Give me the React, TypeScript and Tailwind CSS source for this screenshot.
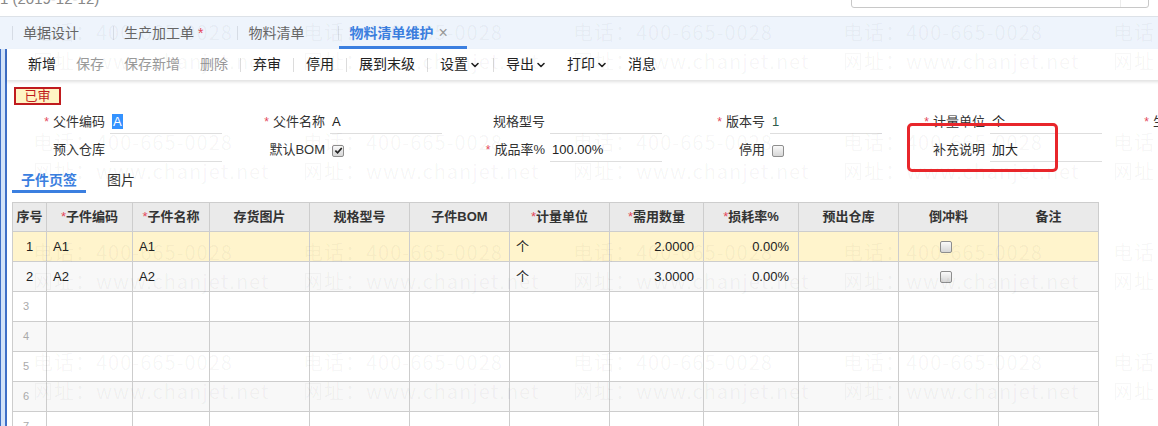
import { ChevronDown } from 'lucide-react';

const tabs = [
    { label: '单据设计' },
    { label: '生产加工单', dirty: true },
    { label: '物料清单' },
    { label: '物料清单维护', active: true },
];

const columns = [
    { w: 'w-[34px]', label: '序号' },
    { w: 'w-[86px]', label: '子件编码', req: true },
    { w: 'w-[77px]', label: '子件名称', req: true },
    { w: 'w-[100px]', label: '存货图片' },
    { w: 'w-[100px]', label: '规格型号' },
    { w: 'w-[100px]', label: '子件BOM' },
    { w: 'w-[100px]', label: '计量单位', req: true },
    { w: 'w-[94px]', label: '需用数量', req: true },
    { w: 'w-[95px]', label: '损耗率%', req: true },
    { w: 'w-[100px]', label: '预出仓库' },
    { w: 'w-[100px]', label: '倒冲料' },
    { w: 'w-[100px]', label: '备注' },
];

const items = [
    { code: 'A1', name: 'A1', unit: '个', qty: '2.0000', loss: '0.00%' },
    { code: 'A2', name: 'A2', unit: '个', qty: '3.0000', loss: '0.00%' },
];

function CheckBox({ checked = false }: { checked?: boolean }) {
    return (
        <span className="inline-flex h-[12px] w-[12px] items-center justify-center rounded-[2px] border border-[#8e8e8e] bg-linear-to-b from-[#fafafa] to-[#d6d6d6] align-middle">
            {checked && (
                <svg width="9" height="9" viewBox="0 0 10 10">
                    <path d="M1.5 5.2 L4 7.6 L8.6 2.2" stroke="#222" strokeWidth="1.9" fill="none" />
                </svg>
            )}
        </span>
    );
}

function Field({ label, req, line = true, children }: { label?: string; req?: boolean; line?: boolean; children?: React.ReactNode }) {
    return (
        <div className="flex h-[28px] items-center">
            <div className="w-[97px] whitespace-nowrap text-right text-[13px] text-[#333]">
                {req && <span className="mr-[4px] text-[12px] text-[#e4475a]">*</span>}
                {label}
            </div>
            <div className={`ml-[5px] h-[24px] w-[112px] whitespace-nowrap pl-[2px] text-[13px] leading-[24px] text-[#222] ${line ? 'border-b border-[#dedede]' : ''}`}>
                {children}
            </div>
        </div>
    );
}

function ToolBtn({ label, muted, menu }: { label: string; muted?: boolean; menu?: boolean }) {
    return (
        <div className={`flex items-center px-[10px] text-[14px] ${muted ? 'text-[#9a9a9a]' : 'text-[#222]'}`}>
            {label}
            {menu && <ChevronDown size={12} strokeWidth={3.2} className="ml-[1px]" />}
        </div>
    );
}

const Sep = () => <span className="mx-[2px] h-[14px] w-[1px] bg-[#dcdcdc]"></span>;

export default function App() {
    return (
        <div className="relative h-[426px] w-[1158px] overflow-hidden bg-white font-['Liberation_Sans','Noto_Sans_CJK_SC',sans-serif]">
            {/* top strip, cut off */}
            <div className="flex h-[16px] overflow-hidden">
                <span className="-mt-[12px] whitespace-nowrap text-[15px] text-[#888]">1 (2019-12-12)</span>
                <div className="ml-auto mr-[9px] -mt-[13px] flex h-[21px] w-[298px] justify-end rounded-[3px] border border-[#c8c8c8]">
                    <div className="w-[28px] border-l border-[#ececec]"></div>
                </div>
            </div>

            {/* page tabs */}
            <div className="flex h-[33px] items-stretch border-t border-[#dde2e8] bg-[#eef4fc] pl-[12px]">
                {tabs.map((t) => (
                    <div key={t.label} className="flex items-stretch">
                        <span className="my-auto h-[14px] w-[1px] bg-[#d6dce5]"></span>
                        <div className={`flex items-center pl-[10px] pr-[17px] text-[14px] ${t.active ? 'border-b-[3px] border-[#3b7fe0] pt-[3px] font-semibold text-[#3b7fe0]' : 'text-[#666]'}`}>
                            {t.label}
                            {t.dirty && <span className="ml-[4px] text-[#e4475a]">*</span>}
                            <span className={`ml-[5px] w-[12px] text-[16px] font-normal leading-none text-[#9a9a9a] ${t.active ? '' : 'invisible'}`}>×</span>
                        </div>
                    </div>
                ))}
            </div>

            <div className="flex">
                {/* left blue edge */}
                <div className="h-[377px] w-[7px] shrink-0 border-l border-r-2 border-[#3f6fc6] bg-[#d3e3f8]"></div>

                <div className="flex-1">
                    {/* toolbar */}
                    <div className="flex h-[31px] items-center pl-[11px] shadow-[0_2px_3px_rgba(0,0,0,0.12)]">
                        <ToolBtn label="新增" />
                        <ToolBtn label="保存" muted />
                        <ToolBtn label="保存新增" muted />
                        <ToolBtn label="删除" muted />
                        <Sep />
                        <ToolBtn label="弃审" />
                        <Sep />
                        <ToolBtn label="停用" />
                        <Sep />
                        <ToolBtn label="展到末级" />
                        <Sep />
                        <ToolBtn label="设置" menu />
                        <Sep />
                        <ToolBtn label="导出" menu />
                        <ToolBtn label="打印" menu />
                        <ToolBtn label="消息" />
                    </div>

                    {/* status */}
                    <div className="mt-[7px] ml-[7px] flex h-[18px] w-[47px] items-center justify-center border-2 border-[#c01b1e] bg-[#fff4c4] text-[13px] text-[#c01b1e]">
                        已审
                    </div>

                    {/* header form */}
                    <div className="mt-[3px] ml-[1px] grid grid-cols-[repeat(6,220px)]">
                        <Field label="父件编码" req>
                            <span className="bg-[#3392ff] px-[1px] text-white">A</span>
                        </Field>
                        <Field label="父件名称" req>A</Field>
                        <Field label="规格型号"></Field>
                        <Field label="版本号" req>
                            <span className="text-[#2e5b4c]">1</span>
                        </Field>
                        <Field label="计量单位" req>个</Field>
                        <Field label="生效日期" req></Field>

                        <Field label="预入仓库"></Field>
                        <Field label="默认BOM" line={false}>
                            <CheckBox checked />
                        </Field>
                        <Field label="成品率%" req>100.00%</Field>
                        <Field label="停用" line={false}>
                            <CheckBox />
                        </Field>
                        <Field label="补充说明">加大</Field>
                        <div></div>
                    </div>

                    {/* detail tabs */}
                    <div className="mt-[2px] ml-[5px] flex h-[27px] items-stretch">
                        <div className="flex items-center border-b-[3px] border-[#3b7fe0] px-[9px] pt-[4px] text-[14px] font-bold text-[#3b7fe0]">子件页签</div>
                        <div className="ml-[12px] flex items-center px-[9px] pt-[4px] pb-[3px] text-[14px] text-[#333]">图片</div>
                    </div>

                    {/* detail grid */}
                    <table className="mt-[9px] ml-[5px] table-fixed border-collapse text-[13px] text-[#222]">
                        <colgroup>
                            {columns.map((c) => (
                                <col key={c.label} className={c.w} />
                            ))}
                        </colgroup>
                        <thead>
                            <tr className="h-[29px] bg-[#eaeaea]">
                                {columns.map((c) => (
                                    <th key={c.label} className="border border-[#cdcdcd] text-center font-bold text-[#333]">
                                        {c.req && <span className="font-normal text-[#e4475a]">*</span>}
                                        {c.label}
                                    </th>
                                ))}
                            </tr>
                        </thead>
                        <tbody>
                            {items.map((it, i) => (
                                <tr key={i} className={`h-[30px] ${i === 0 ? 'bg-[#fff4cc]' : 'bg-[#f8f8f8]'}`}>
                                    <td className="border border-[#cdcdcd] text-center">{i + 1}</td>
                                    <td className="border border-[#cdcdcd] pl-[6px]">{it.code}</td>
                                    <td className="border border-[#cdcdcd] pl-[6px]">{it.name}</td>
                                    <td className="border border-[#cdcdcd]"></td>
                                    <td className="border border-[#cdcdcd]"></td>
                                    <td className="border border-[#cdcdcd]"></td>
                                    <td className="border border-[#cdcdcd] pl-[6px]">{it.unit}</td>
                                    <td className="border border-[#cdcdcd] pr-[9px] text-right">{it.qty}</td>
                                    <td className="border border-[#cdcdcd] pr-[9px] text-right">{it.loss}</td>
                                    <td className="border border-[#cdcdcd]"></td>
                                    <td className="border border-[#cdcdcd] pr-[5px] text-center">
                                        <CheckBox />
                                    </td>
                                    <td className="border border-[#cdcdcd]"></td>
                                </tr>
                            ))}
                            {[3, 4, 5, 6, 7].map((n) => (
                                <tr key={n} className={`h-[30px] ${n % 2 === 0 ? 'bg-[#f8f8f8]' : 'bg-white'}`}>
                                    <td className="border border-[#cdcdcd] pl-[10px] text-[11px] text-[#aaa]">{n}</td>
                                    {columns.slice(1).map((c) => (
                                        <td key={c.label} className="border border-[#cdcdcd]"></td>
                                    ))}
                                </tr>
                            ))}
                        </tbody>
                    </table>
                </div>
            </div>

            {/* watermark */}
            <div className="pointer-events-none absolute inset-0 grid grid-cols-[repeat(5,270px)] auto-rows-[110px] pl-[33px] pt-[17px] font-['Noto_Sans_CJK_SC',sans-serif] text-[20px] leading-[29px] tracking-[1px] text-black/[0.045]">
                {Array.from({ length: 20 }).map((_, i) => (
                    <div key={i} className="whitespace-nowrap">
                        <div>电话：400-665-0028</div>
                        <div>网址：www.chanjet.net</div>
                    </div>
                ))}
            </div>

            {/* annotation box */}
            <div className="pointer-events-none absolute left-[907px] top-[123px] h-[49px] w-[151px] rounded-[5px] border-[3px] border-[#e8262b]"></div>
        </div>
    );
}
